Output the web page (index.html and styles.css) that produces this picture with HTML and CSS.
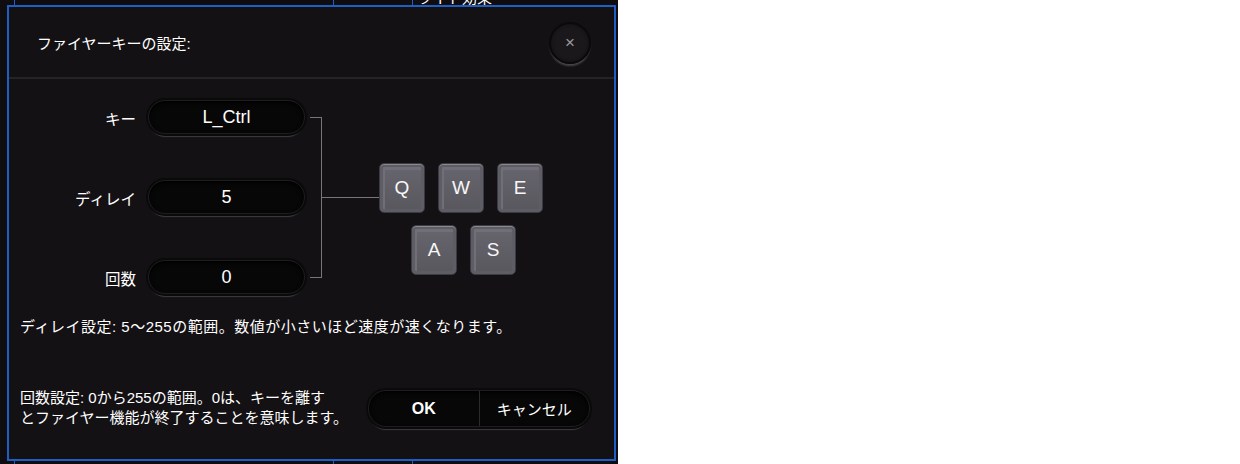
FILE: index.html
```html
<!DOCTYPE html>
<html lang="ja">
<head>
<meta charset="utf-8">
<title>ファイヤーキーの設定</title>
<link rel="stylesheet" href="styles.css">
</head>
<body>
<div class="app">
  <div class="app-peek">ライト効果</div>
  <div class="dialog">
    <div class="dlg-head">
      <div class="dlg-title">ファイヤーキーの設定:</div>
      <button class="close" type="button">×</button>
    </div>
    <div class="dlg-body">
      <div class="setup">
        <div class="form">
          <div class="lbl">キー</div><div class="pill field">L_Ctrl</div>
          <div class="lbl">ディレイ</div><div class="pill field">5</div>
          <div class="lbl">回数</div><div class="pill field">0</div>
        </div>
        <div class="bracket"></div>
        <div class="link"></div>
        <div class="keys">
          <div class="krow"><span class="key">Q</span><span class="key">W</span><span class="key">E</span></div>
          <div class="krow indent"><span class="key">A</span><span class="key">S</span></div>
        </div>
      </div>
      <p class="desc first">ディレイ設定: 5～255の範囲。数値が小さいほど速度が速くなります。</p>
      <div class="foot">
        <p class="desc">回数設定: 0から255の範囲。0は、キーを離す<br>とファイヤー機能が終了することを意味します。</p>
        <div class="pill btns"><button type="button" class="ok">OK</button><button type="button">キャンセル</button></div>
      </div>
    </div>
  </div>
</div>
</body>
</html>
```
FILE: styles.css
```css
html, body {
  margin: 0;
  background: #ffffff;
}
body {
  font-family: "Liberation Sans", "Noto Sans CJK JP", sans-serif;
}
.app {
  position: relative;
  width: 618px;
  height: 464px;
  overflow: hidden;
  background-color: #0f0d10;
  background-image:
    linear-gradient(#1d5fc2, #1d5fc2),
    linear-gradient(#1d5fc2, #1d5fc2),
    linear-gradient(#1d5fc2, #1d5fc2);
  background-size: 1px 100%, 1px 100%, 1px 100%;
  background-position: 14px 0, 333px 0, 412px 0;
  background-repeat: no-repeat;
}
.app-peek {
  margin: -10px 0 0 417px;
  font-size: 15px;
  line-height: 16px;
  color: #ffffff;
}
.dialog {
  position: absolute;
  left: 7px;
  top: 5px;
  width: 609px;
  height: 456px;
  box-sizing: border-box;
  border: 2px solid #1e5fc4;
  background: #141114;
  color: #ffffff;
}
.dlg-head {
  height: 72px;
  box-sizing: border-box;
  padding: 0 23px 0 28px;
  display: flex;
  align-items: center;
  justify-content: space-between;
  border-bottom: 2px solid #262326;
}
.dlg-title {
  font-size: 15px;
}
.close {
  width: 42px;
  height: 42px;
  box-sizing: border-box;
  border-radius: 50%;
  border: 2px solid #0a090b;
  background: radial-gradient(circle, #1b181c 55%, #0d0b0e 100%);
  box-shadow: 0 3px 2px -1px #48464a;
  color: #9a989c;
  font-size: 17px;
  font-family: "Liberation Sans", sans-serif;
  padding: 0;
  margin-top: 2px;
}
.dlg-body {
  padding: 21px 24px 0 11px;
}
.setup {
  display: flex;
  align-items: flex-start;
}
.form {
  display: grid;
  grid-template-columns: 116px 157px;
  grid-auto-rows: 36px;
  column-gap: 12px;
  row-gap: 44px;
}
.lbl {
  align-self: center;
  text-align: right;
  font-size: 15.5px;
  margin-top: -1px;
}
.pill {
  box-sizing: border-box;
  border-radius: 18px;
  background: #080708;
  border: 1px solid #1e1c1f;
  box-shadow: 0 0 0 2px #0b0a0b, 0 4px 1px -1px #3e3c40, inset 0 2px 4px #000000;
}
.field {
  height: 34px;
  display: flex;
  align-items: center;
  justify-content: center;
  font-size: 18px;
  color: #ffffff;
}
.bracket {
  margin: 17px 0 0 5px;
  width: 12px;
  height: 161px;
  box-sizing: border-box;
  border: 1px solid #78767b;
  border-left: none;
}
.link {
  margin-top: 97px;
  width: 57px;
  height: 1px;
  background: #78767b;
}
.keys {
  margin-top: 63px;
  display: flex;
  flex-direction: column;
  gap: 12px;
}
.krow {
  display: flex;
  gap: 13px;
}
.krow.indent {
  margin-left: 32px;
}
.key {
  width: 46px;
  height: 50px;
  box-sizing: border-box;
  display: flex;
  align-items: center;
  justify-content: center;
  border-radius: 5px;
  border: 1px solid #3c3b42;
  background: linear-gradient(#67666e, #58575e);
  box-shadow: inset 0 1px 0 #8a8991, inset 0 0 0 3px #5e5d65, inset 2px 3px 0 3px #706f77;
  color: #f7f7f7;
  font-size: 19px;
}
.desc {
  margin: 0;
  font-size: 15px;
  line-height: 20px;
  color: #ffffff;
}
.desc.first {
  margin-top: 21px;
  letter-spacing: 0.5px;
}
.foot {
  margin-top: 51px;
  display: flex;
  align-items: center;
  justify-content: space-between;
}
.btns {
  width: 222px;
  height: 37px;
  display: flex;
  margin-top: 1px;
}
.btns button {
  flex: 1;
  background: none;
  border: none;
  color: #ffffff;
  font-family: "Liberation Sans", "Noto Sans CJK JP", sans-serif;
  font-size: 15px;
  padding: 0;
}
.btns .ok {
  border-right: 1px solid #2c2a2d;
  font-size: 16px;
  font-weight: bold;
}
```
